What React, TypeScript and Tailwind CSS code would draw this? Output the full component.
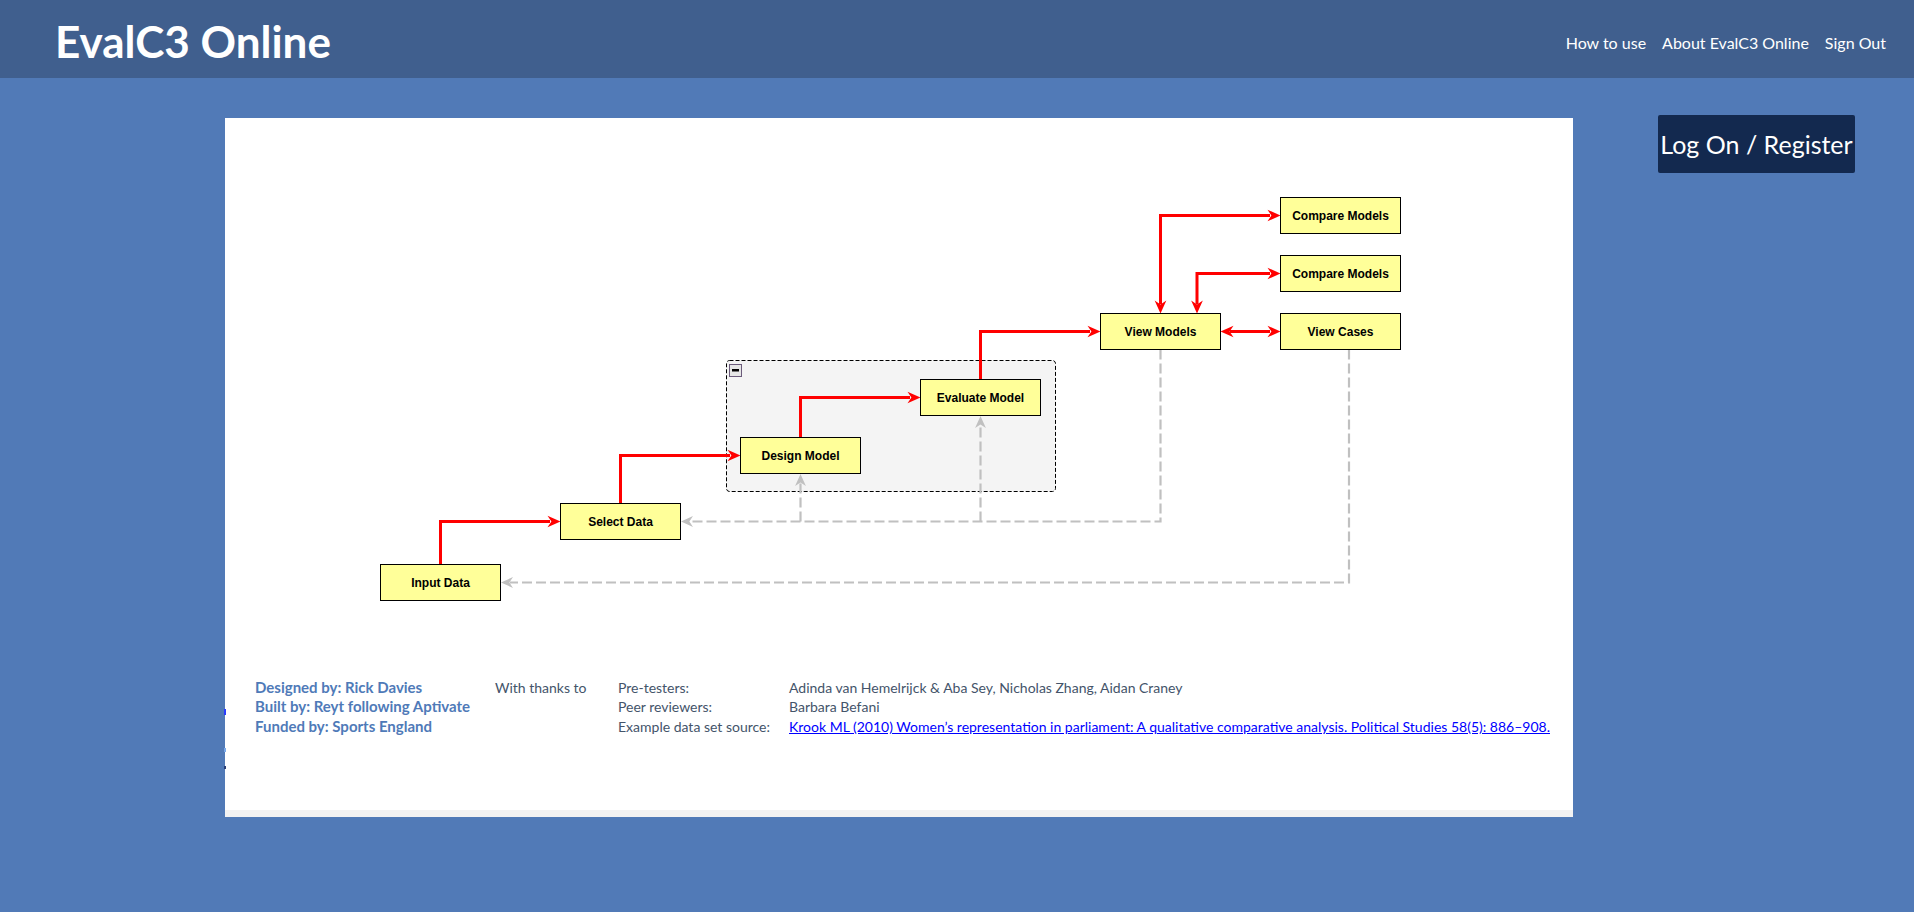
import React from "react";

const boxes = [
  { x: 156.5, y: 446.5, label: "Input Data" },
  { x: 336.5, y: 385.5, label: "Select Data" },
  { x: 516.5, y: 319.5, label: "Design Model" },
  { x: 696.5, y: 261.5, label: "Evaluate Model" },
  { x: 876.5, y: 195.5, label: "View Models" },
  { x: 1056.5, y: 195.5, label: "View Cases" },
  { x: 1056.5, y: 79.5, label: "Compare Models" },
  { x: 1056.5, y: 137.5, label: "Compare Models" },
];

// arrow head with a notched back, tip at (x, y), pointing in direction dir
function Head({ x, y, dir, color, size = 13 }: { x: number; y: number; dir: "r" | "l" | "u" | "d"; color: string; size?: number }) {
  const rot = { r: 0, l: 180, u: -90, d: 90 }[dir];
  const w = size * 0.45;
  return (
    <path
      d={`M0 0 L${-size} ${-w} L${-size * 0.7} 0 L${-size} ${w} Z`}
      fill={color}
      transform={`translate(${x} ${y}) rotate(${rot})`}
    />
  );
}

function Diagram() {
  const red = "#ff0000";
  const gray = "#c0c0c0";
  return (
    <svg width="1348" height="560" viewBox="1 0 1348 560" className="block">
      {/* group container */}
      <rect x="502.5" y="242.5" width="329" height="131" rx="3" fill="#f4f4f4" stroke="#000" strokeDasharray="4 2" />
      <rect x="505.5" y="246.5" width="12" height="12" fill="#e6e6e6" stroke="#6b5b7b" />
      <rect x="508" y="251" width="7" height="2.5" fill="#000" />

      {/* feedback (dashed) */}
      <g fill="none" stroke={gray} strokeWidth="2.2" strokeDasharray="10 4">
        <path d="M936.5 231.5 V403.5 H466" />
        <path d="M576.5 403.5 V365" />
        <path d="M756.5 403.5 V307" />
        <path d="M1125 231.5 V464.5 H286" />
      </g>
      <Head x={457} y={403.5} dir="l" color={gray} size={12} />
      <Head x={576.5} y={356} dir="u" color={gray} size={12} />
      <Head x={756.5} y={298} dir="u" color={gray} size={12} />
      <Head x={277} y={464.5} dir="l" color={gray} size={12} />

      {/* main flow */}
      <g fill="none" stroke={red} strokeWidth="3">
        <path d="M216.5 446.5 V403.5 H326" />
        <path d="M396.5 385.5 V337.5 H506" />
        <path d="M576.5 319.5 V279.5 H686" />
        <path d="M756.5 261.5 V213.5 H866" />
        <path d="M936.5 186 V97.5 H1046" />
        <path d="M973 186 V155.5 H1046" />
        <path d="M1006 213.5 H1046" />
      </g>
      <Head x={336.5} y={403.5} dir="r" color={red} />
      <Head x={516.5} y={337.5} dir="r" color={red} />
      <Head x={696.5} y={279.5} dir="r" color={red} />
      <Head x={876.5} y={213.5} dir="r" color={red} />
      <Head x={1056.5} y={97.5} dir="r" color={red} />
      <Head x={936.5} y={195.5} dir="d" color={red} />
      <Head x={1056.5} y={155.5} dir="r" color={red} />
      <Head x={973} y={195.5} dir="d" color={red} />
      <Head x={1056.5} y={213.5} dir="r" color={red} />
      <Head x={996.5} y={213.5} dir="l" color={red} />

      {boxes.map((b, i) => (
        <g key={i}>
          <rect x={b.x} y={b.y} width="120" height="36" fill="#ffff99" stroke="#000" />
          <text
            x={b.x + 60}
            y={b.y + 22.5}
            textAnchor="middle"
            fontFamily="'Liberation Sans', Arial, sans-serif"
            fontWeight="bold"
            fontSize="12"
            fill="#000"
          >
            {b.label}
          </text>
        </g>
      ))}
    </svg>
  );
}

export default function App() {
  return (
    <div className="min-h-screen bg-[#517ab7]" style={{ fontFamily: "Lato, 'Open Sans', sans-serif" }}>
      {/* Header */}
      <header className="h-[78px] bg-[#405f8e] flex items-start justify-between pl-[55px] pr-[28px]">
        <h1 className="pt-[15px] text-[44px] font-bold leading-[1.2] text-white">EvalC3 Online</h1>
        <nav className="pt-[33px] flex gap-[16px] text-[16px] leading-[1.2] text-white">
          <a href="#">How to use</a>
          <a href="#">About EvalC3 Online</a>
          <a href="#">Sign Out</a>
        </nav>
      </header>

      {/* Body */}
      <div className="flex items-start pl-[225px] pt-[40px] gap-[85px]">
        <div className="relative w-[1348px] h-[699px] bg-white flex flex-col">
          <Diagram />

          <div className="grid grid-cols-[240px_123px_171px_auto] pl-[30px] leading-[19.4px]">
            <div className="flex flex-col text-[15px] font-bold text-[#4f7ab8]">
              <span>Designed by: Rick Davies</span>
              <span>Built by: Reyt following Aptivate</span>
              <span>Funded by: Sports England</span>
            </div>
            <div className="text-[14px] text-[#44546a]">With thanks to</div>
            <div className="flex flex-col text-[14px] text-[#44546a]">
              <span>Pre-testers:</span>
              <span>Peer reviewers:</span>
              <span>Example data set source:</span>
            </div>
            <div className="flex flex-col text-[14px] text-[#44546a]">
              <span>Adinda van Hemelrijck &amp; Aba Sey, Nicholas Zhang, Aidan Craney</span>
              <span>Barbara Befani</span>
              <a href="#" className="text-[#0000ff] underline">
                Krook ML (2010) Women’s representation in parliament: A qualitative comparative analysis. Political Studies 58(5): 886–908.
              </a>
            </div>
          </div>

          <div className="mt-auto h-[7px] bg-[#f2f2f2]" />

          {/* clipped overflow marks at the left edge */}
          <span className="absolute left-[-1px] top-[591px] w-[2px] h-[6px] bg-[#2a3cff]" />
          <span className="absolute left-[-1px] top-[630px] w-[2px] h-[4px] bg-[#7aa8e8]" />
          <span className="absolute left-[-1px] top-[648px] w-[2px] h-[3px] bg-[#2b3f75]" />
        </div>

        <button className="mt-[-3px] w-[197px] h-[58px] rounded-[2px] bg-[#13294f] text-white text-[25px] leading-none">
          Log On / Register
        </button>
      </div>
    </div>
  );
}
